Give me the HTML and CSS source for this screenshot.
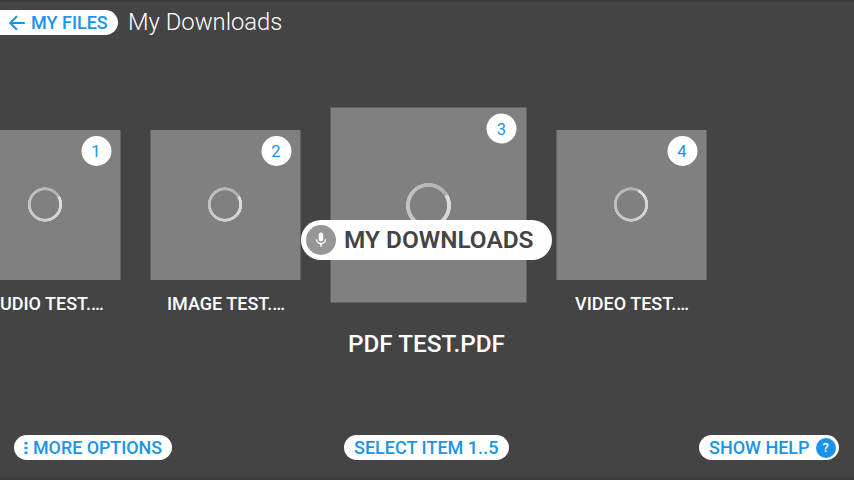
FILE: index.html
```html
<!DOCTYPE html>
<html lang="en">
<head>
<meta charset="utf-8">
<title>My Downloads</title>
<link rel="stylesheet" href="styles.css">
</head>
<body>
<div class="screen">
  <header class="header">
    <button class="pill back"><svg class="arrow" width="16" height="16" viewBox="0 0 16 16"><path d="M15.8 8H1.4M8 1.2L1.2 8L8 14.8"/></svg><span>MY FILES</span></button>
    <h1 class="title">My Downloads</h1>
  </header>
  <main class="carousel">
    <article class="item"><div class="tile"><span class="badge">1</span><span class="spinner"></span></div><p class="label">AUDIO TEST.…</p></article>
    <article class="item"><div class="tile"><span class="badge">2</span><span class="spinner"></span></div><p class="label">IMAGE TEST.…</p></article>
    <article class="item active"><div class="tile"><span class="badge">3</span><span class="spinner"></span></div><p class="label">PDF TEST.PDF</p></article>
    <article class="item"><div class="tile"><span class="badge">4</span><span class="spinner late"></span></div><p class="label">VIDEO TEST.…</p></article>
  </main>
  <footer class="footer">
    <button class="pill more"><svg width="4" height="14" viewBox="0 0 4 14"><path d="M.5 1h3v2.600h-3zM.5 5.700h3v2.600h-3zM.5 10.400h3V13h-3z"/></svg><span>MORE OPTIONS</span></button>
    <button class="pill select"><span>SELECT ITEM 1..5</span></button>
    <button class="pill help"><span>SHOW HELP</span><span class="question">?</span></button>
  </footer>
  <div class="toast"><span class="mic"><svg width="18" height="18" viewBox="0 0 24 24"><path d="M12 14c1.66 0 3-1.34 3-3V5c0-1.66-1.34-3-3-3S9 3.34 9 5v6c0 1.66 1.34 3 3 3zm5.3-3c0 3-2.54 5.100-5.300 5.100S6.700 14 6.700 11H5c0 3.410 2.720 6.230 6 6.720V21h2v-3.280c3.280-.48 6-3.300 6-6.720h-1.700z"/></svg></span><span>MY DOWNLOADS</span></div>
</div>
</body>
</html>
```
FILE: styles.css
```css
* { box-sizing: border-box; }
body {
  margin: 0;
  font-family: Roboto, "Liberation Sans", sans-serif;
  background: #444;
  color: #fff;
}
.screen {
  position: relative;
  display: flex;
  flex-direction: column;
  width: 854px;
  height: 480px;
  overflow: hidden;
  background: linear-gradient(#363636, #444 3px, #444 476px, #3c3c3c 478px);
}
.header {
  display: flex;
  align-items: center;
  gap: 10px;
  height: 25px;
  margin-top: 10px;
}
.pill {
  display: flex;
  align-items: center;
  height: 25px;
  padding: 0 10px;
  border: 0;
  border-radius: 13px;
  background: #fff;
  color: #1a94e8;
  font: 500 18px/25px Roboto, "Liberation Sans", sans-serif;
  white-space: nowrap;
}
.pill svg { flex: none; }
.back {
  width: 118px;
  padding: 0 0 0 9px;
  gap: 6px;
  border-radius: 0 13px 13px 0;
}
.arrow { fill: none; stroke: #1a94e8; stroke-width: 2; }
.title {
  margin: 0;
  padding-bottom: 2px;
  font-size: 23.8px;
  font-weight: 300;
  line-height: 24px;
}
.carousel {
  display: flex;
  gap: 30px;
  height: 300px;
  margin: 72px 0 0 -30px;
}
.item {
  flex: none;
  width: 150px;
  padding-top: 23px;
  transform: translateX(.5px);
}
.tile {
  position: relative;
  display: flex;
  align-items: center;
  justify-content: center;
  height: 150px;
  background: #808080;
}
.badge {
  position: absolute;
  top: 6px;
  right: 9.5px;
  width: 30px;
  height: 30px;
  border-radius: 50%;
  background: #fff;
  color: #1a94e8;
  font-size: 16.5px;
  line-height: 31px;
  text-align: center;
}
.spinner {
  width: 35px;
  height: 35px;
  margin: 0 1px 1px 0;
  border-radius: 50%;
  background: conic-gradient(from 60deg, #dedede, #b0b0b0);
  -webkit-mask: radial-gradient(closest-side, transparent 13.8px, #000 14.5px, #000 17px, transparent 17.5px);
  mask: radial-gradient(closest-side, transparent 13.8px, #000 14.5px, #000 17px, transparent 17.5px);
}
.late { background: conic-gradient(from 27deg, #dedede, #b0b0b0); }
.label {
  margin: 13px -1px 0 0;
  font-size: 18px;
  font-weight: 500;
  line-height: 22px;
  text-align: center;
  white-space: nowrap;
}
.active {
  width: 196px;
  padding-top: 0;
  transform: translate(.5px, .5px);
}
.active .tile { height: 195px; }
.active .badge { right: 10px; }
.active .spinner {
  width: 46px;
  height: 46px;
  margin: 0;
  -webkit-mask: radial-gradient(closest-side, transparent 18.2px, #000 19px, #000 22.2px, transparent 22.9px);
  mask: radial-gradient(closest-side, transparent 18.2px, #000 19px, #000 22.2px, transparent 22.9px);
}
.active .label {
  margin: 26px 4px 0 0;
  font-size: 24.3px;
  line-height: 30px;
}
.footer {
  display: grid;
  grid-template-columns: 1fr auto 1fr;
  margin: 28px 15px 0 14px;
}
.more { justify-self: start; gap: 5px; width: 158px; font-size: 17.85px; }
.more svg { fill: #1a94e8; }
.select { width: 165px; font-size: 18.05px; }
.help { justify-self: end; gap: 6px; width: 140px; padding-right: 0; }
.question {
  width: 20px;
  height: 20px;
  border-radius: 50%;
  background: #1a94e8;
  color: #fff;
  font-size: 13px;
  line-height: 20px;
  text-align: center;
}
.toast {
  position: absolute;
  left: 301px;
  top: 220px;
  display: flex;
  align-items: center;
  gap: 8px;
  width: 251px;
  height: 40px;
  padding-left: 5px;
  border-radius: 20px;
  background: #fff;
  color: #444;
  font-size: 24.4px;
  font-weight: 600;
  line-height: 28px;
  white-space: nowrap;
}
.mic {
  display: flex;
  align-items: center;
  justify-content: center;
  width: 30px;
  height: 30px;
  border-radius: 50%;
  background: #969696;
}
.mic svg { fill: #fff; }
```
